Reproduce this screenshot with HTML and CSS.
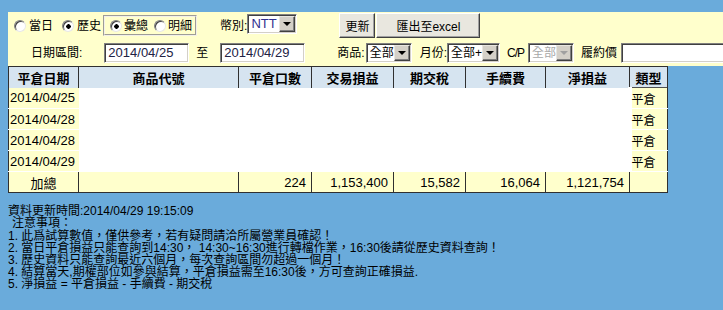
FILE: index.html
```html
<!DOCTYPE html>
<html lang="zh-Hant">

<head>
    <meta charset="UTF-8">
    <title>平倉損益查詢</title>
    <link rel="stylesheet" href="styles.css">
</head>

<body>
    <div class="page">
        <div class="panel">
            <div class="row row-top">
                <input type="radio" name="range" class="radio first">
                <label class="lbl">當日</label>
                <input type="radio" name="range" class="radio gap9" checked>
                <label class="lbl">歷史</label>
                <div class="group-box">
                    <input type="radio" name="mode" class="radio" checked>
                    <label class="lbl">彙總</label>
                    <input type="radio" name="mode" class="radio gap6">
                    <label class="lbl">明細</label>
                </div>
                <span class="text currency-label">幣別:</span>
                <span class="sel sel-ntt"><span class="sel-val ntt">NTT</span><span class="sel-btn"><span class="tri"></span></span></span>
                <button class="btn btn-refresh">更新</button>
                <button class="btn btn-export">匯出至excel</button>
            </div>
            <div class="row row-bottom">
                <span class="text date-label">日期區間:</span>
                <input type="text" class="field date-from" value="2014/04/25">
                <span class="text to-label">至</span>
                <input type="text" class="field date-to" value="2014/04/29">
                <span class="text product-label">商品:</span>
                <span class="sel sel-product"><span class="sel-val">全部</span><span class="sel-btn"><span class="tri"></span></span></span>
                <span class="text month-label">月份:</span>
                <span class="sel sel-month"><span class="sel-val">全部+</span><span class="sel-btn"><span class="tri"></span></span></span>
                <span class="text cp-label">C/P</span>
                <span class="sel sel-cp disabled"><span class="sel-val">全部</span><span class="sel-btn"><span class="tri"></span></span></span>
                <span class="text strike-label">履約價</span>
                <input type="text" class="field strike">
            </div>
        </div>

        <table class="result">
            <thead>
                <tr>
                    <th class="c-date">平倉日期</th>
                    <th class="c-code">商品代號</th>
                    <th class="c-qty">平倉口數</th>
                    <th class="c-pl">交易損益</th>
                    <th class="c-tax">期交稅</th>
                    <th class="c-fee">手續費</th>
                    <th class="c-net">淨損益</th>
                    <th class="c-type">類型</th>
                </tr>
            </thead>
            <tbody>
                <tr>
                    <td class="date">2014/04/25</td>
                    <td></td><td></td><td></td><td></td><td></td><td></td>
                    <td class="type">平倉</td>
                </tr>
                <tr>
                    <td class="date">2014/04/28</td>
                    <td></td><td></td><td></td><td></td><td></td><td></td>
                    <td class="type">平倉</td>
                </tr>
                <tr>
                    <td class="date">2014/04/28</td>
                    <td></td><td></td><td></td><td></td><td></td><td></td>
                    <td class="type">平倉</td>
                </tr>
                <tr>
                    <td class="date">2014/04/29</td>
                    <td></td><td></td><td></td><td></td><td></td><td></td>
                    <td class="type">平倉</td>
                </tr>
                <tr class="total">
                    <td class="center">加總</td>
                    <td></td>
                    <td class="num">224</td>
                    <td class="num">1,153,400</td>
                    <td class="num">15,582</td>
                    <td class="num">16,064</td>
                    <td class="num">1,121,754</td>
                    <td></td>
                </tr>
            </tbody>
        </table>

        <div class="notes">
            <div>資料更新時間:2014/04/29 19:15:09</div>
            <div class="indent">注意事項：</div>
            <div>1. 此爲試算數值，僅供參考，若有疑問請洽所屬營業員確認！</div>
            <div>2. 當日平倉損益只能查詢到14:30， 14:30~16:30進行轉檔作業，16:30後請從歷史資料查詢！</div>
            <div>3. 歷史資料只能查詢最近六個月，每次查詢區間勿超過一個月！</div>
            <div>4. 結算當天,期權部位如參與結算，平倉損益需至16:30後，方可查詢正確損益.</div>
            <div>5. 淨損益 = 平倉損益 - 手續費 - 期交稅</div>
        </div>
    </div>
</body>

</html>
```

FILE: styles.css
```css
body {
    margin: 0;
    padding: 0;
    background-color: #6AABDB;
    font-family: 'Liberation Sans', 'Noto Sans CJK TC', sans-serif;
    font-size: 12px;
    color: #000;
    overflow: hidden;
}

.page {
    padding: 12px 0 0 8px;
}

/* query panel */
.panel {
    background-color: #FFFFCC;
    height: 54px;
    overflow: hidden;
}

.row {
    display: flex;
    align-items: center;
    white-space: nowrap;
}

.row-top {
    height: 27px;
}

.row-bottom {
    height: 27px;
}

.text,
.lbl {
    line-height: 14px;
}

.radio {
    appearance: none;
    -webkit-appearance: none;
    width: 12px;
    height: 12px;
    margin: 0;
    border-radius: 50%;
    border: 1px solid;
    border-color: #808080 #E8E8E8 #E8E8E8 #808080;
    background-color: #fff;
    box-shadow: inset 1px 1px 0 #404040;
    flex-shrink: 0;
}

.radio:checked {
    background: radial-gradient(circle at 55% 55%, #000 0, #000 2px, #fff 2.5px);
}

.radio.first {
    margin-left: 6px;
}

.radio.gap9 {
    margin-left: 9px;
}

.radio.gap6 {
    margin-left: 6px;
}

.lbl {
    margin-left: 3px;
}

.group-box {
    display: flex;
    align-items: center;
    height: 17px;
    margin-left: 2px;
    padding: 0 3px 0 5px;
    border: 2px groove #F2F0E8;
}

.group-box .lbl {
    margin-left: 2px;
}

.currency-label {
    margin-left: 23px;
}

/* fake select boxes */
.sel {
    display: flex;
    align-items: center;
    box-sizing: border-box;
    height: 20px;
    background-color: #fff;
    border: 1px solid;
    border-color: #808080 #fff #fff #808080;
    box-shadow: inset 1px 1px 0 #404040, inset -1px -1px 0 #D4D0C8;
    padding: 2px 2px 2px 3px;
}

.sel-val {
    flex: 1;
    font-size: 12px;
    line-height: 14px;
}

.sel-val.ntt {
    font-size: 13px;
    color: #303090;
}

.sel-btn {
    display: flex;
    align-items: center;
    justify-content: center;
    box-sizing: border-box;
    width: 16px;
    height: 16px;
    margin-right: -1px;
    background-color: #D4D0C8;
    border: 1px solid;
    border-color: #E8E6E0 #404040 #404040 #E8E6E0;
    box-shadow: inset -1px -1px 0 #808080;
}

.tri {
    width: 0;
    height: 0;
    border-left: 4px solid transparent;
    border-right: 4px solid transparent;
    border-top: 4px solid #000;
    margin-top: 1px;
}

.sel.disabled .sel-val {
    color: #A8A8A8;
}

.sel.disabled .tri {
    border-top-color: #A0A0A0;
}

.sel-ntt {
    width: 50px;
    margin-bottom: 4px;
}

.sel-product {
    width: 63px;
    margin-left: 1px;
}

.sel-month {
    width: 67px;
}

.sel-cp {
    width: 51px;
    margin-left: 4px;
}

.btn {
    box-sizing: border-box;
    height: 25px;
    padding: 0;
    background-color: #E9E7DF;
    border: 1px solid;
    border-color: #fff #404040 #404040 #fff;
    box-shadow: inset -1px -1px 0 #A0A0A0;
    font-family: 'Liberation Sans', 'Noto Sans CJK TC', sans-serif;
    font-size: 12px;
    color: #000;
}

.btn-refresh {
    width: 36px;
    margin-left: 42px;
}

.btn-export {
    width: 104px;
    margin-left: 1px;
}

.field {
    box-sizing: border-box;
    height: 20px;
    margin: 0;
    padding: 0 3px;
    background-color: #fff;
    border: 1px solid;
    border-color: #808080 #fff #fff #808080;
    box-shadow: inset 1px 1px 0 #404040, inset -1px -1px 0 #D4D0C8;
    font-family: 'Liberation Sans', sans-serif;
    font-size: 13px;
    color: #222244;
    outline: none;
}

.date-label {
    margin-left: 23px;
}

.date-from {
    width: 85px;
    margin-left: 22px;
}

.to-label {
    margin-left: 7px;
}

.date-to {
    width: 85px;
    margin-left: 12px;
}

.product-label {
    margin-left: 32px;
}

.month-label {
    margin-left: 8px;
}

.cp-label {
    margin-left: 7px;
    letter-spacing: -1px;
}

.strike-label {
    margin-left: 7px;
}

.strike {
    width: 120px;
    margin-left: 4px;
    flex-shrink: 0;
}

/* result table */
.result {
    border-collapse: collapse;
    border: 1px solid #303030;
    table-layout: fixed;
    width: 652px;
}

.result th {
    height: 20px;
    padding: 0;
    background-color: #D6E4F0;
    border-right: 1px solid #303030;
    font-size: 13px;
    font-weight: bold;
    text-align: center;
}

.c-date { width: 69px; }
.c-code { width: 159px; }
.c-qty { width: 72px; }
.c-pl { width: 81px; }
.c-tax { width: 71px; }
.c-fee { width: 79px; }
.c-net { width: 83px; }
.c-type { width: 37px; }

.result td {
    height: 20px;
    padding: 0;
    background-color: #fff;
    border-bottom: 1px solid #fff;
}

.result td.date {
    background-color: #FFFFCC;
    padding-left: 1px;
    font-size: 13px;
}

.result td.type {
    background-color: #FFFFCC;
    border-top: 1px solid #505050;
    border-left: 4px solid #fff;
    padding-left: 0;
}

.result tr.total td {
    height: 20px;
    background-color: #FFFFCC;
    border: 1px solid #303030;
    font-size: 13px;
}

.result td.center {
    text-align: center;
}

.result td.num {
    text-align: right;
    padding-right: 5px;
}

/* notes */
.notes {
    margin-top: 12px;
    line-height: 12px;
    font-size: 12px;
}

.notes .indent {
    padding-left: 4px;
    margin-bottom: 1px;
}
```
